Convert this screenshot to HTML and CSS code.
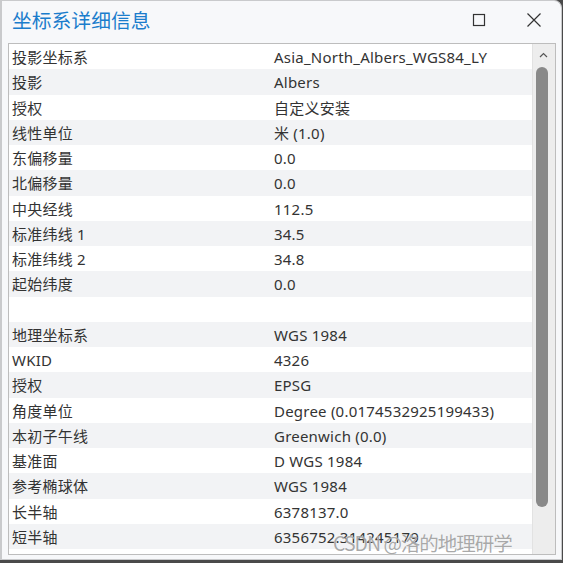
FILE: index.html
```html
<!DOCTYPE html>
<html lang="zh">
<head>
<meta charset="utf-8">
<link rel="stylesheet" href="styles.css">
</head>
<body>
<div class="window">
  <div class="titlebar">
    <div class="title">坐标系详细信息</div>
    <div class="controls">
      <svg class="ctl" width="14" height="14" viewBox="0 0 14 14"><rect x="1.5" y="1.5" width="11" height="11" fill="none" stroke="#333" stroke-width="1.2"/></svg>
      <svg class="ctl" width="16" height="16" viewBox="0 0 16 16"><path d="M1.5 1.5 L14.5 14.5 M14.5 1.5 L1.5 14.5" stroke="#333" stroke-width="1.2" fill="none"/></svg>
    </div>
  </div>
  <div class="listbox">
    <div class="rows">
      <div class="row"><span>投影坐标系</span><span>Asia_North_Albers_WGS84_LY</span></div>
      <div class="row"><span>投影</span><span>Albers</span></div>
      <div class="row"><span>授权</span><span>自定义安装</span></div>
      <div class="row"><span>线性单位</span><span>米 (1.0)</span></div>
      <div class="row"><span>东偏移量</span><span>0.0</span></div>
      <div class="row"><span>北偏移量</span><span>0.0</span></div>
      <div class="row"><span>中央经线</span><span>112.5</span></div>
      <div class="row"><span>标准纬线 1</span><span>34.5</span></div>
      <div class="row"><span>标准纬线 2</span><span>34.8</span></div>
      <div class="row"><span>起始纬度</span><span>0.0</span></div>
      <div class="row"><span></span><span></span></div>
      <div class="row"><span>地理坐标系</span><span>WGS 1984</span></div>
      <div class="row"><span>WKID</span><span>4326</span></div>
      <div class="row"><span>授权</span><span>EPSG</span></div>
      <div class="row"><span>角度单位</span><span>Degree (0.0174532925199433)</span></div>
      <div class="row"><span>本初子午线</span><span>Greenwich (0.0)</span></div>
      <div class="row"><span>基准面</span><span>D WGS 1984</span></div>
      <div class="row"><span>参考椭球体</span><span>WGS 1984</span></div>
      <div class="row"><span>长半轴</span><span>6378137.0</span></div>
      <div class="row"><span>短半轴</span><span>6356752.314245179</span></div>
    </div>
    <div class="scrollbar">
      <svg class="arrow" width="9" height="6" viewBox="0 0 9 6"><path d="M1 5 L4.5 1.5 L8 5" stroke="#555" stroke-width="1.2" fill="none"/></svg>
      <div class="thumb"></div>
    </div>
  </div>
  <div class="watermark">CSDN @洛的地理研学</div>
</div>
</body>
</html>
```
FILE: styles.css
```css
html, body {
  margin: 0;
  padding: 0;
}
body {
  width: 563px;
  height: 563px;
  background: #4a4a4a;
  overflow: hidden;
  font-family: "Noto Sans", "Noto Sans CJK SC", sans-serif;
}
.window {
  position: relative;
  width: 559px;
  height: 558px;
  background: #f7f8fa;
  border: 1px solid #c9cacc;
  border-left-width: 2px;
  border-radius: 0 8px 0 0;
  box-sizing: content-box;
}
.titlebar {
  height: 38px;
  display: flex;
  align-items: center;
  justify-content: space-between;
  padding-left: 10px;
}
.title {
  font-family: "Noto Sans CJK SC", sans-serif;
  font-size: 19.8px;
  color: #1b7dcc;
  line-height: 1;
}
.controls {
  display: flex;
  align-items: center;
  gap: 40px;
  padding-right: 19px;
}
.ctl {
  display: block;
}
.listbox {
  margin: 4px 0 0 6px;
  width: 546px;
  height: 510px;
  border: 1px solid #bdbdbd;
  background: #fff;
  display: flex;
}
.rows {
  width: 524px;
}
.row {
  display: grid;
  grid-template-columns: 262px 1fr;
  box-sizing: border-box;
  padding: 1px 0 0 3px;
  height: 25.25px;
  line-height: 24.25px;
  font-size: 15px;
  letter-spacing: 0.22px;
  color: #333;
  white-space: nowrap;
}
.row:nth-child(even) {
  background: #f2f3f5;
}
.scrollbar {
  position: relative;
  width: 22px;
  background: #ededed;
  border-left: 1px solid #e2e2e2;
}
.arrow {
  position: absolute;
  left: 6px;
  top: 8px;
}
.thumb {
  position: absolute;
  left: 3px;
  top: 23px;
  width: 12px;
  height: 440px;
  border-radius: 6px;
  background: #898989;
}
.watermark {
  position: absolute;
  left: 331px;
  top: 527px;
  font-family: "Noto Sans CJK SC", sans-serif;
  font-size: 19.5px;
  letter-spacing: -1px;
  color: rgba(140, 140, 140, 0.75);
  text-shadow: 0 0 1px rgba(255,255,255,0.9);
  white-space: nowrap;
}
```
